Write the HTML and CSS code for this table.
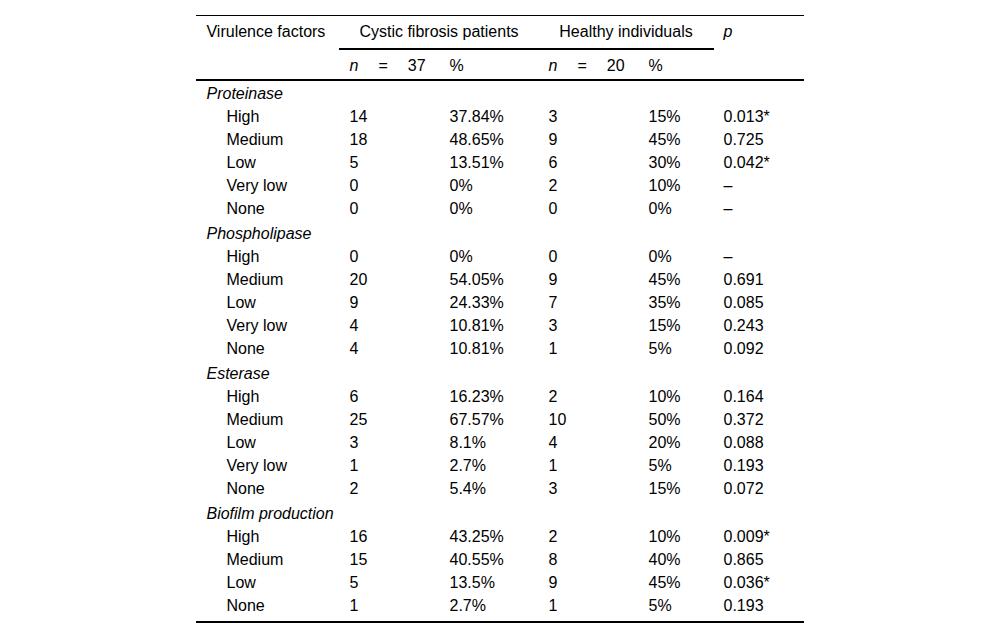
FILE: index.html
```html
<!DOCTYPE html>
<html lang="en">
<head>
<meta charset="utf-8">
<title>Virulence factors</title>
<link rel="stylesheet" href="styles.css">
</head>
<body>
<table class="vt">
  <colgroup>
    <col class="c-name"><col class="c-n"><col class="c-pct"><col class="c-n"><col class="c-pct2"><col class="c-p">
  </colgroup>
  <thead>
    <tr class="h1">
      <th rowspan="2" class="span-cell">Virulence factors</th>
      <th colspan="2" class="group">Cystic fibrosis patients</th>
      <th colspan="2" class="group">Healthy individuals</th>
      <th rowspan="2" class="span-cell"><i>p</i></th>
    </tr>
    <tr class="h2">
      <th><span class="neq"><i>n</i><span>=</span><span>37</span></span></th>
      <th>%</th>
      <th><span class="neq"><i>n</i><span>=</span><span>20</span></span></th>
      <th>%</th>
    </tr>
  </thead>
  <tbody>
    <tr class="grp first"><td colspan="6"><i>Proteinase</i></td></tr>
    <tr><td class="ind">High</td><td>14</td><td>37.84%</td><td>3</td><td>15%</td><td>0.013*</td></tr>
    <tr><td class="ind">Medium</td><td>18</td><td>48.65%</td><td>9</td><td>45%</td><td>0.725</td></tr>
    <tr><td class="ind">Low</td><td>5</td><td>13.51%</td><td>6</td><td>30%</td><td>0.042*</td></tr>
    <tr><td class="ind">Very low</td><td>0</td><td>0%</td><td>2</td><td>10%</td><td>–</td></tr>
    <tr><td class="ind">None</td><td>0</td><td>0%</td><td>0</td><td>0%</td><td>–</td></tr>
    <tr class="grp"><td colspan="6"><i>Phospholipase</i></td></tr>
    <tr><td class="ind">High</td><td>0</td><td>0%</td><td>0</td><td>0%</td><td>–</td></tr>
    <tr><td class="ind">Medium</td><td>20</td><td>54.05%</td><td>9</td><td>45%</td><td>0.691</td></tr>
    <tr><td class="ind">Low</td><td>9</td><td>24.33%</td><td>7</td><td>35%</td><td>0.085</td></tr>
    <tr><td class="ind">Very low</td><td>4</td><td>10.81%</td><td>3</td><td>15%</td><td>0.243</td></tr>
    <tr><td class="ind">None</td><td>4</td><td>10.81%</td><td>1</td><td>5%</td><td>0.092</td></tr>
    <tr class="grp"><td colspan="6"><i>Esterase</i></td></tr>
    <tr><td class="ind">High</td><td>6</td><td>16.23%</td><td>2</td><td>10%</td><td>0.164</td></tr>
    <tr><td class="ind">Medium</td><td>25</td><td>67.57%</td><td>10</td><td>50%</td><td>0.372</td></tr>
    <tr><td class="ind">Low</td><td>3</td><td>8.1%</td><td>4</td><td>20%</td><td>0.088</td></tr>
    <tr><td class="ind">Very low</td><td>1</td><td>2.7%</td><td>1</td><td>5%</td><td>0.193</td></tr>
    <tr><td class="ind">None</td><td>2</td><td>5.4%</td><td>3</td><td>15%</td><td>0.072</td></tr>
    <tr class="grp"><td colspan="6"><i>Biofilm production</i></td></tr>
    <tr><td class="ind">High</td><td>16</td><td>43.25%</td><td>2</td><td>10%</td><td>0.009*</td></tr>
    <tr><td class="ind">Medium</td><td>15</td><td>40.55%</td><td>8</td><td>40%</td><td>0.865</td></tr>
    <tr><td class="ind">Low</td><td>5</td><td>13.5%</td><td>9</td><td>45%</td><td>0.036*</td></tr>
    <tr class="last"><td class="ind">None</td><td>1</td><td>2.7%</td><td>1</td><td>5%</td><td>0.193</td></tr>
  </tbody>
</table>
</body>
</html>
```
FILE: styles.css
```css
html, body {
  margin: 0;
  padding: 0;
  background: #fff;
}

body {
  padding-top: 15px;
  font-family: "Liberation Sans", Arial, sans-serif;
  font-size: 16px;
  color: #000;
}

.vt {
  width: 607px;
  margin: 0 auto;
  table-layout: fixed;
  border-collapse: separate;
  border-spacing: 0;
  border-top: 1px solid #000;
}

.c-name { width: 143px; }
.c-n { width: 100px; }
.c-pct { width: 99px; }
.c-pct2 { width: 75px; }
.c-p { width: 90px; }

.vt th,
.vt td {
  padding: 0 10px;
  text-align: left;
  font-weight: normal;
  line-height: 23px;
  white-space: nowrap;
  vertical-align: top;
}

.vt .h1 th {
  padding-top: 4px;
  padding-bottom: 5px;
}

.vt .h1 th.group {
  text-align: center;
  border-bottom: 2px solid #000;
}

.vt .h1 th.span-cell {
  border-bottom: 2px solid #000;
}

.vt .h2 th {
  padding-top: 4px;
  padding-bottom: 2px;
  border-bottom: 2px solid #000;
}

.neq {
  display: inline-flex;
  gap: 20px;
}

.vt .grp td {
  padding-top: 2px;
}

.vt .grp.first td {
  padding-top: 2px;
  line-height: 21.5px;
}

.vt td.ind {
  padding-left: 30px;
}

.vt .last td {
  padding-bottom: 4.5px;
  border-bottom: 2px solid #000;
}
```
